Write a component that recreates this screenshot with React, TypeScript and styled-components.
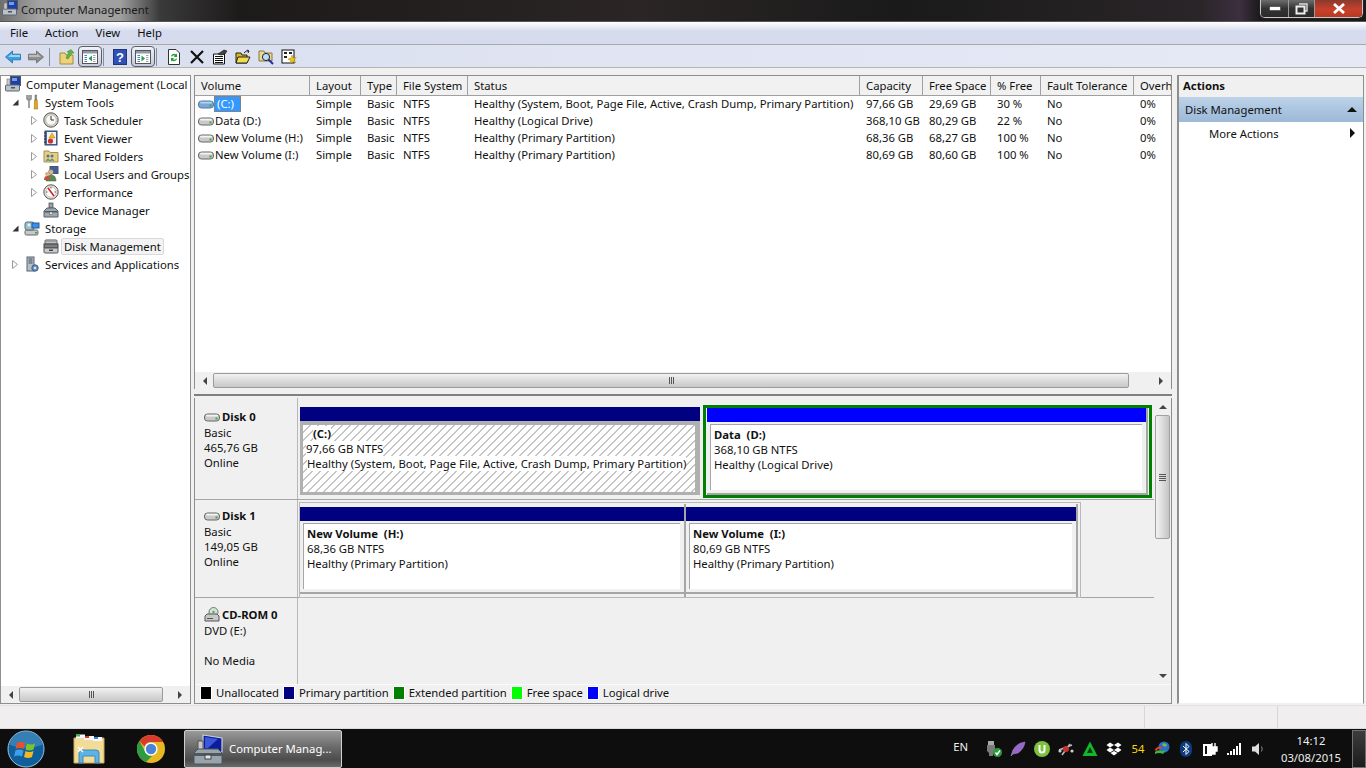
import React from 'react'
import styled, { createGlobalStyle } from 'styled-components'

const GlobalStyle = createGlobalStyle`
  html, body {
    margin: 0;
    padding: 0;
    background: #f0f0f0;
    overflow: hidden;
  }
  * {
    box-sizing: border-box;
  }
`

const Page = styled.div`
  color: #111;
  display: flex;
  flex-direction: column;
  font-family: 'Noto Sans', 'Open Sans', sans-serif;
  font-size: 11.3px;
  height: 768px;
  overflow: hidden;
  width: 1366px;
`

const TitleBar = styled.div`
  align-items: flex-start;
  background: linear-gradient(90deg, #6f6f6f 0, #a4a4a4 40px, #a0a0a0 120px, #3a3a3a 160px, #1d1a1a 240px, #2b2525 640px, #1a1a1a 900px, #2a2528 1200px, #3c2f3f 1240px, #1a1a1a 1260px);
  border-bottom: 1px solid #555;
  display: flex;
  flex: 0 0 22px;
  padding-left: 2px;
`

const TitleText = styled.span`
  color: #1a1a1a;
  line-height: 19px;
  margin-left: 3px;
  white-space: nowrap;
`

const WindowButtons = styled.div`
  border: 1px solid #c8c8c8;
  border-radius: 0 0 5px 5px;
  border-top: none;
  box-shadow: 0 0 0 1px #222;
  display: flex;
  height: 18px;
  margin-left: auto;
  margin-right: 3px;
  overflow: hidden;
`

const WindowButton = styled.div<{ $w: number; $close?: boolean }>`
  align-items: center;
  background: ${p => (p.$close ? 'linear-gradient(#8a3a2e, #c8402a 55%, #b83a22)' : 'linear-gradient(#6c6c6c, #333 50%, #2a2a2a)')};
  border-right: ${p => (p.$close ? 'none' : '1px solid #9a9a9a')};
  display: flex;
  height: 100%;
  justify-content: center;
  width: ${p => p.$w}px;
`

const MenuBar = styled.div`
  align-items: center;
  background: linear-gradient(#fff 0, #eef0f8 4px, #d6dcee 9px, #d5dbed 100%);
  border-bottom: 1px solid #a9a9a9;
  display: flex;
  flex: 0 0 23px;
  gap: 17px;
  padding: 0 0 1px 10px;
`

const ToolBar = styled.div`
  align-items: center;
  background: linear-gradient(90deg, #d9deef, #e2e6f4 60%, #e6e9f5);
  border-bottom: 1px solid #b4b4b4;
  display: flex;
  flex: 0 0 23px;
  padding: 1px 0 0 1px;
`

const ToolButton = styled.div<{ $framed?: boolean }>`
  align-items: center;
  background: ${p => (p.$framed ? 'linear-gradient(#f0f2f8, #c4c9da)' : 'transparent')};
  border: ${p => (p.$framed ? '1px solid #5a5f6a' : 'none')};
  border-radius: 4px;
  display: flex;
  height: 21px;
  justify-content: center;
  width: ${p => (p.$framed ? 24 : 23)}px;
`

const ToolSep = styled.div<{ $l: number; $r: number }>`
  background: #8a8fa0;
  flex: none;
  height: 18px;
  margin: 0 ${p => p.$r}px 0 ${p => p.$l}px;
  width: 1px;
`

const Main = styled.div`
  background: #f0f0f0;
  display: flex;
  flex: 0 0 636px;
  padding: 7px 2px 1px 0;
`

const TreePane = styled.div`
  background: #fff;
  border: 1px solid #8e8e8e;
  display: flex;
  flex: 0 0 191px;
  flex-direction: column;
  margin-right: 3px;
  min-width: 0;
`

const TreeList = styled.div`
  flex: 1;
  margin-top: -1px;
  overflow: hidden;
`

const TreeRow = styled.div<{ $level: number }>`
  align-items: center;
  display: flex;
  height: 18px;
  padding-left: ${p => [4, 7, 26][p.$level]}px;
  white-space: nowrap;
`

const Twisty = styled.span`
  align-items: center;
  display: flex;
  flex: 0 0 14px;
  justify-content: center;
  margin-right: 2px;
`

const TreeLabel = styled.span<{ $picked?: boolean }>`
  background: ${p => (p.$picked ? '#f3f3f3' : 'transparent')};
  border: 1px solid ${p => (p.$picked ? '#d9d9d9' : 'transparent')};
  border-radius: 2px;
  line-height: 15px;
  margin-left: 2px;
  padding: 0 2px;
`

const HScroll = styled.div`
  align-items: center;
  background: #f0f0f0;
  display: flex;
  flex: 0 0 17px;
  padding: 0 8px;

  > *:last-child {
    margin-left: auto;
  }
`

const ScrollThumb = styled.div<{ $w: number }>`
  align-items: center;
  background: linear-gradient(#f2f2f2, #dcdcdc 50%, #c8c8c8);
  border: 1px solid #9b9b9b;
  border-radius: 2px;
  display: flex;
  height: 15px;
  justify-content: center;
  margin-left: 6px;
  width: ${p => p.$w}px;
`

const Grip = styled.span`
  border-left: 1px solid #555;
  border-right: 1px solid #555;
  height: 7px;
  position: relative;
  width: 5px;

  &::after {
    background: #555;
    content: '';
    height: 7px;
    left: 1px;
    position: absolute;
    width: 1px;
  }
`

const Arrow = styled.span<{ $dir: 'left' | 'right' | 'up' | 'down'; $c?: string; $size?: number }>`
  border: ${p => p.$size || 4}px solid transparent;
  flex: none;
  height: 0;
  width: 0;
  ${p => (p.$dir === 'left' ? `border-left-width:0;border-right-color:${p.$c || '#444'};` : '')}
  ${p => (p.$dir === 'right' ? `border-right-width:0;border-left-color:${p.$c || '#444'};` : '')}
  ${p => (p.$dir === 'up' ? `border-top-width:0;border-bottom-color:${p.$c || '#444'};` : '')}
  ${p => (p.$dir === 'down' ? `border-bottom-width:0;border-top-color:${p.$c || '#444'};` : '')}
`

const Center = styled.div`
  display: flex;
  flex: 0 0 978px;
  flex-direction: column;
  margin-right: 5px;
`

const VolumePane = styled.div`
  background: #fff;
  border: 1px solid #8e8e8e;
  border-bottom: none;
  display: flex;
  flex: 0 0 314px;
  flex-direction: column;
`

const Columns = '115px 51px 36px 71px 392px 63px 68px 50px 93px 1fr'

const HeaderRow = styled.div`
  display: grid;
  flex: 0 0 19px;
  grid-template-columns: ${Columns};
`

const HeaderCell = styled.div`
  background: #f1f1f1;
  border-bottom: 1px solid #a0a0a0;
  border-right: 1px solid #a0a0a0;
  line-height: 19px;
  overflow: hidden;
  padding-left: 6px;
  white-space: nowrap;

  &:last-child {
    border-right: none;
  }
`

const VolumeBody = styled.div`
  flex: 1;
  margin-top: -1px;
`

const VolumeRow = styled.div`
  display: grid;
  grid-template-columns: ${Columns};
  height: 17px;
`

const Cell = styled.div`
  line-height: 17px;
  overflow: hidden;
  padding-left: 6px;
  white-space: nowrap;
`

const VolumeCell = styled.div`
  align-items: center;
  display: flex;
  padding-left: 3px;
  white-space: nowrap;
`

const VolumeName = styled.span<{ $picked?: boolean }>`
  background: ${p => (p.$picked ? '#3399ff' : 'transparent')};
  color: ${p => (p.$picked ? '#fff' : '#111')};
  line-height: 16px;
  outline: ${p => (p.$picked ? '1px dotted #c86a20' : 'none')};
  outline-offset: -1px;
  padding: ${p => (p.$picked ? '0 7px 0 3px' : '0 0 0 1px')};
`

const Splitter = styled.div`
  border-bottom: 2px solid #808080;
  flex: 0 0 7px;
  margin-bottom: 2px;
`

const DiskPane = styled.div`
  background: #f0f0f0;
  border: 1px solid #8e8e8e;
  border-top: none;
  display: flex;
  flex: 1;
  flex-direction: column;
`

const DiskScroller = styled.div`
  display: flex;
  flex: 0 0 286px;
`

const DiskList = styled.div`
  flex: 1;
  overflow: hidden;
`

const DiskRow = styled.div<{ $h: number; $last?: boolean }>`
  border-bottom: ${p => (p.$last ? 'none' : '1px solid #a6a6a6')};
  display: flex;
  height: ${p => p.$h}px;
`

const DiskLabel = styled.div<{ $top: number }>`
  border-right: 1px solid #b8b8b8;
  flex: 0 0 103px;
  line-height: 15px;
  padding: ${p => p.$top}px 0 0 9px;
  white-space: nowrap;
`

const DiskName = styled.div`
  align-items: center;
  display: flex;
  font-weight: 700;
  gap: 2px;
  height: 15px;
  margin-bottom: 1px;
`

const Partitions = styled.div<{ $top: number }>`
  align-items: flex-start;
  display: flex;
  flex: 1;
  padding: ${p => p.$top}px 0 0 2px;
`

const Partition = styled.div<{ $w?: number; $flush?: boolean }>`
  border-right: 2px solid #a6a6a6;
  flex: none;
  padding-top: ${p => (p.$flush ? 0 : 3)}px;
  width: ${p => (p.$w ? `${p.$w}px` : 'auto')};
`

const BootPartition = styled.div<{ $w: number }>`
  flex: none;
  padding: 3px 1px 0 0;
  width: ${p => p.$w}px;
`

const GreenFrame = styled.div<{ $w: number }>`
  border: 3px solid #008000;
  flex: none;
  height: 93px;
  margin: 1px 0 0 2px;
  padding: 0 1px;
  width: ${p => p.$w}px;
`

const PartitionBar = styled.div<{ $c: string }>`
  background: ${p => p.$c};
  height: 14px;
`

const PartitionBox = styled.div`
  border-bottom: 2px solid #a6a6a6;
  display: flex;
  height: 73px;
  line-height: 15px;
  padding: 2px 4px 3px 3px;
  white-space: nowrap;
`

const PartFace = styled.div`
  background: #fff;
  border-left: 1px solid #a6a6a6;
  border-top: 1px solid #a6a6a6;
  flex: 1;
  padding: 2px 0 0 3px;
`

const HatchedBox = styled.div`
  background: repeating-linear-gradient(135deg, #fff 0, #fff 4.66px, #c4c4c4 4.66px, #c4c4c4 5.66px);
  border: 4px solid #b0b0b0;
  border-bottom-width: 3px;
  border-left-width: 3px;
  border-right-width: 5px;
  height: 74px;
  line-height: 15px;
  padding: 1px 0 0 3px;
  white-space: nowrap;
`

const PartTitle = styled.div`
  font-weight: 700;
  padding-left: 7px;
`

const PartLine = styled.div<{ $in?: number }>`
  padding-left: ${p => p.$in || 0}px;

  span {
    background: #fff;
  }
`

const Outline = styled.div`
  border: 1px solid #b8b8b8;
  display: flex;
  height: 96px;
  margin: -1px 0 0 -1px;
  padding: 1px 2px 0 0;
`

const VScroll = styled.div`
  align-items: center;
  background: #f0f0f0;
  display: flex;
  flex: 0 0 17px;
  flex-direction: column;
  padding: 7px 0 6px;
`

const VThumb = styled.div`
  align-items: center;
  background: linear-gradient(90deg, #f2f2f2, #dcdcdc 50%, #c4c4c4);
  border: 1px solid #a0a0a0;
  border-radius: 2px;
  display: flex;
  flex-direction: column;
  gap: 1px;
  height: 124px;
  justify-content: center;
  margin: 6px 0 auto;
  width: 15px;
`

const GripLine = styled.span`
  background: #555;
  height: 1px;
  width: 7px;
`

const Legend = styled.div`
  align-items: center;
  background: #f0f0f0;
  border-top: 1px solid #fafafa;
  display: flex;
  flex: 1;
  gap: 4px;
  letter-spacing: -0.04px;
  padding: 0 0 3px 5px;
`

const LegendItem = styled.div`
  align-items: center;
  display: flex;
  gap: 4px;
`

const Swatch = styled.span<{ $c: string }>`
  background: ${p => p.$c};
  border: 1px solid #fff;
  flex: none;
  height: 14px;
  width: 12px;
`

const ActionsPane = styled.div`
  background: #fff;
  border: 1px solid #8e8e8e;
  border-bottom-color: #f0f0f0;
  border-left-width: 2px;
  display: flex;
  flex: 1;
  flex-direction: column;
  min-width: 0;
`

const ActionsHead = styled.div`
  background: #f0f0f0;
  font-weight: 700;
  height: 21px;
  line-height: 20px;
  padding-left: 4px;
`

const ActionGroup = styled.div`
  align-items: center;
  background: linear-gradient(#bcd2e8, #9cb9d8);
  display: flex;
  height: 25px;
  justify-content: space-between;
  padding: 0 6px 1px 6px;
`

const ActionItem = styled.div`
  align-items: center;
  display: flex;
  height: 24px;
  justify-content: space-between;
  padding: 0 8px 2px 30px;
`

const StatusBar = styled.div`
  background: #f0eeee;
  border-top: 1px solid #e2e2e2;
  display: grid;
  flex: 0 0 23px;
  grid-template-columns: 1145px 133px 1fr;
`

const StatusCell = styled.div`
  border-right: 1px solid #d8d6d6;

  &:last-child {
    border-right: none;
  }
`

const TaskBar = styled.div`
  align-items: center;
  background: #0e0e0e;
  border-top: 1px solid #dcdcdc;
  display: flex;
  flex: 1;
`

const StartOrb = styled.div`
  display: flex;
  flex: 0 0 58px;
  justify-content: center;
  padding-right: 6px;
`

const PinnedIcon = styled.div`
  align-items: center;
  display: flex;
  flex: 0 0 62px;
  justify-content: center;
`

const ActiveTask = styled.div`
  align-items: center;
  background: linear-gradient(#9a9a9a, #6a6a6a 45%, #4c4c4c 80%, #6a6a6a);
  border: 1px solid #d0d0d0;
  border-radius: 2px;
  color: #fff;
  display: flex;
  gap: 5px;
  height: 38px;
  margin-left: 2px;
  padding-left: 7px;
  width: 158px;
`

const Tray = styled.div`
  align-items: center;
  display: flex;
  margin-left: auto;
`

const Lang = styled.span`
  color: #eee;
  margin-right: 18px;
  margin-top: -4px;
`

const TrayIcons = styled.div`
  align-items: center;
  display: flex;
  gap: 8px;
`

const TrayIcon = styled.div`
  align-items: center;
  color: #ffd800;
  display: flex;
  height: 16px;
  justify-content: center;
  width: 16px;
`

const Clock = styled.div`
  color: #eee;
  flex: 0 0 82px;
  line-height: 17px;
  margin-left: 4px;
  padding-top: 1px;
  text-align: center;
`

const ShowDesktop = styled.div`
  background: linear-gradient(#3c3c3c, #1c1c1c);
  border: 1px solid #707070;
  flex: 0 0 14px;
  height: 38px;
`

const Svg = ({ s = 16, vb = 16, children }: { s?: number; vb?: number; children: React.ReactNode }) => (
  <svg width={s} height={s} viewBox={`0 0 ${vb} ${vb}`} style={{ flex: 'none', display: 'block' }}>
    {children}
  </svg>
)

const DriveIcon = ({ blue }: { blue?: boolean }) => (
  <Svg>
    <rect x="0.5" y="5" width="15" height="7" rx="3" fill={blue ? '#7ba7d6' : '#c9c9c9'} stroke={blue ? '#4a78a8' : '#666'} />
    <rect x="2" y="5.8" width="12" height="1.6" rx="0.8" fill={blue ? '#b5d3ee' : '#f3f3f3'} />
    <rect x="11.5" y="8.5" width="2" height="2" fill="#3fa33f" />
  </Svg>
)

const ComputerIcon = () => (
  <Svg>
    <rect x="5.5" y="0.5" width="10" height="9" fill="#1c3fa8" stroke="#555" />
    <rect x="7" y="2" width="5" height="3" fill="#6ea0e8" />
    <rect x="0.5" y="9" width="14" height="6" rx="1" fill="#b8c2c8" stroke="#5c666c" />
    <rect x="2" y="3" width="3" height="6" fill="#c8ccd0" stroke="#6c7074" strokeWidth="0.6" />
    <rect x="6" y="11" width="4" height="1.5" fill="#4c5458" />
  </Svg>
)

const ToolsIcon = () => (
  <Svg>
    <path d="M5 1 v4 M3 1 v3 q0 2 2 2 q2 0 2-2 V1 M5 6 v8" stroke="#8a8a8a" strokeWidth="1.6" fill="none" />
    <path d="M11 1 h1.6 v5 h-1.6 z" fill="#999" stroke="#555" strokeWidth="0.5" />
    <path d="M10.6 6 h2.6 l0.4 9 h-3.4 z" fill="#e6a817" stroke="#8a6410" strokeWidth="0.5" />
  </Svg>
)

const ClockIcon = () => (
  <Svg>
    <circle cx="8" cy="8" r="7.2" fill="#d8d4c4" stroke="#555" />
    <circle cx="8" cy="8" r="5.2" fill="#f8f8f4" stroke="#999" strokeWidth="0.5" />
    <path d="M8 4 V8 H11" stroke="#333" fill="none" />
  </Svg>
)

const EventIcon = () => (
  <Svg>
    <rect x="2" y="1" width="12" height="14" fill="#4c6cb0" stroke="#34486c" />
    <rect x="4" y="2" width="9" height="12" fill="#f2f2f2" />
    <path d="M9 3 l3 5 h-6 z" fill="#f4c20d" stroke="#8a6a00" strokeWidth="0.4" />
    <circle cx="7.5" cy="11" r="2.6" fill="#d03030" />
    <path d="M1 3 h2 M1 6 h2 M1 9 h2 M1 12 h2" stroke="#222" />
  </Svg>
)

const SharedIcon = () => (
  <Svg>
    <path d="M1 3 h5 l1 1.5 h8 V14 H1 z" fill="#e8cf80" stroke="#a89050" />
    <circle cx="5" cy="8" r="1.5" fill="#4a70b8" />
    <circle cx="9" cy="8" r="1.5" fill="#4a70b8" />
    <path d="M3 13 q2-4 4 0 M7 13 q2-4 4 0" stroke="#3a8a50" fill="#7aa0d0" strokeWidth="0.8" />
  </Svg>
)

const UsersIcon = () => (
  <Svg>
    <rect x="7" y="0.5" width="8" height="7" fill="#3c5eb0" stroke="#555" />
    <circle cx="8" cy="6" r="2.5" fill="#e0b890" stroke="#6a5a40" strokeWidth="0.5" />
    <path d="M3 15 q0-6 5-6 q5 0 5 6 z" fill="#5a8a50" stroke="#3c5c34" strokeWidth="0.5" />
    <circle cx="4" cy="8" r="2" fill="#d8b088" />
    <path d="M1 14 q0-4 3-4 q3 0 3 4 z" fill="#c05040" />
  </Svg>
)

const PerfIcon = () => (
  <Svg>
    <circle cx="8" cy="8" r="7.2" fill="#e8e4d8" stroke="#555" />
    <circle cx="8" cy="8" r="5.2" fill="#fff" stroke="#999" strokeWidth="0.5" />
    <path d="M5 4 L11 12" stroke="#d02020" strokeWidth="1.6" />
    <path d="M8 3 v1.5 M3 8 h1.5 M13 8 h-1.5" stroke="#333" strokeWidth="0.8" />
  </Svg>
)

const ToolboxIcon = () => (
  <Svg>
    <rect x="6" y="1" width="4" height="5" fill="#9aa0a8" stroke="#444" strokeWidth="0.7" />
    <path d="M1 9 L4 6 H12 L15 9 V15 H1 z" fill="#9ca8b0" stroke="#56606a" />
    <rect x="1.5" y="9" width="13" height="1.5" fill="#50585e" />
    <rect x="6.5" y="10" width="3" height="2.5" fill="#e8e8e8" stroke="#555" strokeWidth="0.5" />
  </Svg>
)

const StorageIcon = () => (
  <Svg>
    <rect x="1" y="10" width="13" height="5" rx="1.5" fill="#c8c8c8" stroke="#666" />
    <rect x="1" y="2" width="9" height="8" rx="2" fill="#9cc0c8" stroke="#56707a" />
    <rect x="8" y="3" width="7" height="5" fill="#3a8ee8" stroke="#24589c" />
    <circle cx="5" cy="5" r="1.5" fill="#e8f4f8" />
    <rect x="11" y="12" width="2" height="1.5" fill="#3fa33f" />
  </Svg>
)

const DiskMgmtIcon = () => (
  <Svg>
    <rect x="2" y="2" width="12" height="4" rx="1" fill="#dcdcdc" stroke="#555" />
    <rect x="1" y="6" width="14" height="4" fill="#7a7f84" stroke="#444" />
    <rect x="1" y="10" width="14" height="5" rx="1" fill="#c8ccd0" stroke="#555" />
    <rect x="6" y="11.5" width="4" height="1.5" fill="#444" />
    <rect x="3" y="3.3" width="10" height="1" fill="#888" />
  </Svg>
)

const ServicesIcon = () => (
  <Svg>
    <rect x="3" y="1" width="7" height="14" fill="#b4bfcc" stroke="#5a6470" />
    <path d="M4.5 3 h4 M4.5 5 h4 M4.5 7 h4" stroke="#465058" />
    <circle cx="11" cy="12" r="3.2" fill="#6a94c4" stroke="#3c5c80" />
    <circle cx="11" cy="12" r="1" fill="#fff" />
  </Svg>
)

const CdIcon = () => (
  <Svg>
    <circle cx="9.5" cy="5" r="4.5" fill="#cfe4d4" stroke="#777" />
    <circle cx="9.5" cy="5" r="1.2" fill="#5aa85a" />
    <path d="M1 9 L3 7 H13 L15 9 V14 H1 z" fill="#c8c8c8" stroke="#555" />
    <rect x="3" y="11" width="6" height="1" fill="#555" />
  </Svg>
)

const BackIcon = ({ fwd, grey }: { fwd?: boolean; grey?: boolean }) => (
  <Svg>
    <g transform={fwd ? 'translate(16 0) scale(-1 1)' : undefined}>
      <path
        d="M0.5 8 L7.5 2 V5.2 H15.5 V10.8 H7.5 V14 z"
        fill={grey ? '#8f8f8f' : '#3d9fe0'}
        stroke={grey ? '#666' : '#1e6ea8'}
        strokeWidth="0.8"
      />
      <path d="M3 8 L7 4.5 V6 H15 V8 z" fill={grey ? '#bdbdbd' : '#9ad4f4'} />
    </g>
  </Svg>
)

const UpFolderIcon = () => (
  <Svg>
    <path d="M1 4 H6 L7 6 H14 V15 H1 z" fill="#ecd27c" stroke="#a68a3c" />
    <path d="M7 9 L10 3 H8 L12 0.5 L15 4 H13 L9 10 z" fill="#5cb83c" stroke="#3c7c28" strokeWidth="0.5" />
  </Svg>
)

const PaneIcon = ({ right }: { right?: boolean }) => (
  <Svg>
    <rect x="0.5" y="1.5" width="15" height="13" fill="#fff" stroke="#555" />
    <rect x="1" y="2" width="14" height="2.5" fill="#8f97a8" />
    <path d="M2.5 6.5 H5 M2.5 8.5 H5 M2.5 10.5 H5 M2.5 12.5 H5" stroke="#4a78c8" />
    <path d="M11 6.5 H13.5 M11 8.5 H13.5 M11 10.5 H13.5 M11 12.5 H13.5" stroke="#9aa4b8" />
    <path d={right ? 'M6.5 6.5 L10 9.5 L6.5 12.5 z' : 'M10 6.5 L6.5 9.5 L10 12.5 z'} fill="#2a9a4a" />
  </Svg>
)

const HelpIcon = () => (
  <Svg>
    <rect x="1.5" y="0.5" width="13" height="15" fill="#2f50b4" stroke="#20357c" />
    <text x="8" y="13" textAnchor="middle" fontSize="13" fontWeight="700" fill="#fff" fontFamily="Liberation Sans">
      ?
    </text>
  </Svg>
)

const RefreshDocIcon = () => (
  <Svg>
    <path d="M2.5 0.5 H10 L13.5 4 V15.5 H2.5 z" fill="#fff" stroke="#333" />
    <path d="M5 7 a3.2 3.2 0 0 1 5-1.5 L11 4.5 V8 H7.8 L9 6.8 a2 2 0 0 0-3 1 z" fill="#1f9a2f" />
    <path d="M11 10 a3.2 3.2 0 0 1-5 1.5 L5 12.5 V9 H8.2 L7 10.2 a2 2 0 0 0 3-1 z" fill="#1f9a2f" />
  </Svg>
)

const CrossIcon = () => (
  <Svg>
    <path d="M2 2 L14 14 M14 2 L2 14" stroke="#111" strokeWidth="2.2" />
  </Svg>
)

const PropsIcon = () => (
  <Svg>
    <path d="M1.5 5 H12.5 V15 H1.5 z" fill="#fff" stroke="#111" />
    <path d="M3 7.5 H11 M3 9.5 H11 M3 11.5 H11 M3 13.5 H11" stroke="#111" />
    <path d="M6 5 L12 1 L15 2 L13 5 L9 6 z" fill="#444" stroke="#111" strokeWidth="0.6" />
  </Svg>
)

const OpenFolderIcon = () => (
  <Svg>
    <path d="M1 4 H6 L7 6 H12 V14 H1 z" fill="#d8b820" stroke="#222" />
    <path d="M3 8 H15 L12 14 H1 z" fill="#f2dc50" stroke="#222" />
    <path d="M9 4 q2-3 5-2 M14 2 l-2-1 M14 2 l-1 2" stroke="#222" fill="none" />
  </Svg>
)

const SearchIcon = () => (
  <Svg>
    <path d="M1 2 H6 L7 4 H14 V12 H1 z" fill="#e8d890" stroke="#8a7a40" />
    <circle cx="8" cy="8" r="3.6" fill="#b8e0f0" stroke="#224" />
    <path d="M10.5 10.5 L15 15" stroke="#2030a0" strokeWidth="2" />
  </Svg>
)

const WizardIcon = () => (
  <Svg>
    <rect x="1" y="1" width="12" height="13" fill="#fff" stroke="#111" />
    <path d="M3 3 h3 v2 h-3 z M8 3 h3 v2 h-3 z M3 7 h3 v2 h-3 z" fill="#222" />
    <path d="M11 6 l1.2 3 l3 -0.5 l-2 2.2 l1.4 3 l-3-1.2 l-2.4 2.2 l0.4-3.2 l-2.6-1.4 l3-0.8 z" fill="#f2c80f" stroke="#8a6a00" strokeWidth="0.4" />
  </Svg>
)

const MinGlyph = () => (
  <svg width="12" height="5" viewBox="0 0 12 5">
    <rect x="0.5" y="0.5" width="11" height="4" fill="#fff" stroke="#333" strokeWidth="0.6" />
  </svg>
)

const RestoreGlyph = () => (
  <svg width="13" height="12" viewBox="0 0 13 12">
    <path d="M4 1 H12 V8 H10" fill="none" stroke="#ddd" strokeWidth="1.4" />
    <rect x="1.5" y="3.5" width="8" height="7" fill="none" stroke="#eee" strokeWidth="2" />
  </svg>
)

const CloseGlyph = () => (
  <svg width="14" height="11" viewBox="0 0 14 11">
    <path d="M2 1 L12 10 M12 1 L2 10" stroke="#fff" strokeWidth="2.8" />
  </svg>
)

const TreeArrow = ({ open }: { open?: boolean }) =>
  open ? (
    <svg width="7" height="7" viewBox="0 0 7 7">
      <path d="M6.5 0.5 V6.5 H0.5 z" fill="#333" />
    </svg>
  ) : (
    <svg width="6" height="9" viewBox="0 0 6 9">
      <path d="M0.5 0.5 L5.5 4.5 L0.5 8.5 z" fill="#fff" stroke="#9a9a9a" />
    </svg>
  )

const WindowsOrb = () => (
  <svg width="38" height="38" viewBox="0 0 38 38">
    <circle cx="19" cy="19" r="18" fill="#0f5f9c" stroke="#9cc4dc" strokeWidth="1" />
    <path d="M3 15 a16 14 0 0 1 32 0 q-16 6-32 0" fill="#4f95c4" opacity="0.6" />
    <path d="M10 13 q4-2 8 0 l-1.5 6 q-4-2-8 0 z" fill="#e8502a" />
    <path d="M20 13.5 q4 2 8 0 l-1.5 6 q-4 2-8 0 z" fill="#7cc42c" />
    <path d="M8.5 20.5 q4-2 8 0 l-1.5 6 q-4-2-8 0 z" fill="#3f9fe8" />
    <path d="M18.5 21 q4 2 8 0 l-1.5 6 q-4 2-8 0 z" fill="#f4b820" />
  </svg>
)

const ExplorerIcon = () => (
  <svg width="34" height="32" viewBox="0 0 34 32">
    <path d="M2 5 H32 V30 H2 z" fill="#f2dc98" stroke="#c8a860" />
    <rect x="4" y="1.5" width="9" height="4" fill="#f8f8f8" />
    <rect x="4" y="1.5" width="4" height="2" fill="#3cb43c" />
    <rect x="12" y="3" width="10" height="4" fill="#f8f8f8" />
    <rect x="13" y="3" width="4" height="2" fill="#d83c2c" />
    <rect x="21" y="4" width="9" height="4" fill="#f8f8f8" />
    <rect x="22" y="4" width="4" height="2" fill="#2c8ce8" />
    <path d="M7 30 V20 q0-3 3-3 H24 q3 0 3 3 V30 H23 V23 H11 V30 z" fill="#5cb4e4" stroke="#3c88b8" />
    <path d="M6 14 L11 19 M11 14 L6 19" stroke="#fff" strokeWidth="1.2" />
  </svg>
)

const ChromeIcon = () => (
  <svg width="30" height="30" viewBox="0 0 30 30">
    <circle cx="15" cy="15" r="14" fill="#e8b820" />
    <path d="M15 1 A14 14 0 0 1 27.1 8 H15 a7 7 0 0 0-6.5 4.4 L3.5 7 A14 14 0 0 1 15 1 z" fill="#d83c2c" />
    <path d="M3.5 7 L9.6 18.4 a7 7 0 0 0 6.4 3.6 L10 28.1 A14 14 0 0 1 3.5 7 z" fill="#2c9c44" />
    <circle cx="15" cy="15" r="6.6" fill="#fff" />
    <circle cx="15" cy="15" r="5.2" fill="#4a84d8" />
  </svg>
)

const TaskToolbox = () => (
  <svg width="32" height="32" viewBox="0 0 32 32">
    <path d="M11 2 L30 5 V19 L11 17 z" fill="#0c1c9c" stroke="#c8d0d8" strokeWidth="1.2" />
    <path d="M13 4 L26 6 L16 15 L13 15 z" fill="#3a58d8" />
    <rect x="6" y="8" width="5" height="9" fill="#c8c8c8" stroke="#555" />
    <path d="M2 20 L6 16 H26 L30 20 V31 H2 z" fill="#98a4ac" stroke="#4a545c" />
    <rect x="2" y="20" width="28" height="3" fill="#4e585e" />
    <rect x="13" y="22" width="6" height="4" fill="#e8e8e8" stroke="#444" />
  </svg>
)

const UsbTray = () => (
  <Svg>
    <rect x="2" y="0" width="6" height="4" fill="#aaa" />
    <path d="M1 4 H9 V10 L7 12 V15 H3 V12 L1 10 z" fill="#7a7a7a" />
    <circle cx="11.5" cy="11.5" r="4.5" fill="#2a9c3c" />
    <path d="M9.5 11.5 L11 13.5 L14 9.5" stroke="#fff" fill="none" strokeWidth="1.4" />
  </Svg>
)

const FeatherTray = () => (
  <Svg>
    <path d="M1 15 L3 9 Q7 2 15 1 Q14 8 8 12 L3 13 z" fill="#9668c8" stroke="#b48ae0" strokeWidth="0.5" />
  </Svg>
)

const TorrentTray = () => (
  <Svg>
    <circle cx="8" cy="8" r="8" fill="#7cc23c" />
    <path d="M4.5 4 V9 a3.5 3.5 0 0 0 7 0 V4 H9.5 V9 a1.5 1.5 0 0 1-3 0 V4 z" fill="#fff" />
  </Svg>
)

const BugTray = () => (
  <Svg>
    <path d="M1 9 L14 4 M4 14 L12 3" stroke="#bbb" strokeWidth="1.6" />
    <circle cx="8" cy="8" r="3" fill="#c83030" />
    <circle cx="2" cy="10" r="1.6" fill="#ccc" />
    <circle cx="14" cy="10" r="1.6" fill="#ccc" />
  </Svg>
)

const TriangleTray = () => (
  <Svg>
    <path d="M8 0.5 L15.5 15 H0.5 z" fill="#12b82c" />
    <path d="M8 6 L11 12 H5 z" fill="#0a3a14" />
  </Svg>
)

const DropboxTray = () => (
  <Svg>
    <path d="M4 1.5 L8 4 L4 6.5 L0.5 4 z M12 1.5 L15.5 4 L12 6.5 L8 4 z M4 6.5 L8 9 L4 11.5 L0.5 9 z M12 6.5 L15.5 9 L12 11.5 L8 9 z M4.5 12 L8 10 L11.5 12 L8 14.5 z" fill="#fff" />
  </Svg>
)

const IdmTray = () => (
  <Svg>
    <circle cx="10" cy="6" r="5.5" fill="#2c6cc8" />
    <path d="M8 3 q3-2 5 1 q-1 3-4 1 z" fill="#6cc03c" />
    <path d="M0.5 9 q3-5 8-3 l-2 2 q-3-1-4 2 z" fill="#e83c2c" />
    <path d="M1 11 q3-3 7-1 L12 9 L9 13 q-4-2-8 0 z" fill="#3cb83c" />
  </Svg>
)

const BluetoothTray = () => (
  <Svg>
    <rect x="2" y="0" width="12" height="16" rx="6" fill="#0c3a7c" />
    <path d="M5 5 L11 10.5 L8 13.5 V2.5 L11 5.5 L5 11" stroke="#fff" fill="none" />
  </Svg>
)

const PlugTray = () => (
  <Svg>
    <rect x="1" y="3" width="9" height="12" fill="#fff" />
    <rect x="3" y="5" width="2" height="8" fill="#111" />
    <path d="M8 6 h7 v4 h-2 v3 h-3 z M10 2 v4 M13 2 v4" stroke="#fff" fill="#fff" strokeWidth="1.4" />
  </Svg>
)

const SignalTray = () => (
  <Svg>
    <path d="M1 12 h2 v2 h-2 z M4 10 h2 v4 h-2 z M7 8 h2 v6 h-2 z M10 5 h2 v9 h-2 z M13 2 h2 v12 h-2 z" fill="#fff" />
  </Svg>
)

const SpeakerTray = () => (
  <Svg>
    <path d="M2 5.5 H5 L9 2 V14 L5 10.5 H2 z" fill="#ddd" />
    <path d="M11.5 5.5 Q13 8 11.5 10.5" stroke="#888" fill="none" />
  </Svg>
)

const treeItems: { level: number; label: string; icon: React.ReactNode; twisty?: 'open' | 'closed'; picked?: boolean }[] = [
  { level: 1, label: 'System Tools', icon: <ToolsIcon />, twisty: 'open' },
  { level: 2, label: 'Task Scheduler', icon: <ClockIcon />, twisty: 'closed' },
  { level: 2, label: 'Event Viewer', icon: <EventIcon />, twisty: 'closed' },
  { level: 2, label: 'Shared Folders', icon: <SharedIcon />, twisty: 'closed' },
  { level: 2, label: 'Local Users and Groups', icon: <UsersIcon />, twisty: 'closed' },
  { level: 2, label: 'Performance', icon: <PerfIcon />, twisty: 'closed' },
  { level: 2, label: 'Device Manager', icon: <ToolboxIcon /> },
  { level: 1, label: 'Storage', icon: <StorageIcon />, twisty: 'open' },
  { level: 2, label: 'Disk Management', icon: <DiskMgmtIcon />, picked: true },
  { level: 1, label: 'Services and Applications', icon: <ServicesIcon />, twisty: 'closed' },
]

const headers = ['Volume', 'Layout', 'Type', 'File System', 'Status', 'Capacity', 'Free Space', '% Free', 'Fault Tolerance', 'Overh']

const volumes = [
  { name: '(C:)', picked: true, status: 'Healthy (System, Boot, Page File, Active, Crash Dump, Primary Partition)', cap: '97,66 GB', free: '29,69 GB', pct: '30 %' },
  { name: 'Data (D:)', status: 'Healthy (Logical Drive)', cap: '368,10 GB', free: '80,29 GB', pct: '22 %' },
  { name: 'New Volume (H:)', status: 'Healthy (Primary Partition)', cap: '68,36 GB', free: '68,27 GB', pct: '100 %' },
  { name: 'New Volume (I:)', status: 'Healthy (Primary Partition)', cap: '80,69 GB', free: '80,60 GB', pct: '100 %' },
]

const legend = [
  ['#000', 'Unallocated'],
  ['#000080', 'Primary partition'],
  ['#008000', 'Extended partition'],
  ['#00ff00', 'Free space'],
  ['#0000ff', 'Logical drive'],
]

const PartitionCell = ({ c, title, size, status }: { c: string; title: string; size: string; status: string }) => (
  <>
    <PartitionBar $c={c} />
    <PartitionBox>
      <PartFace>
        <b>{title}</b>
        <div>{size}</div>
        <div>{status}</div>
      </PartFace>
    </PartitionBox>
  </>
)

export default function App() {
  return (
    <Page>
      <GlobalStyle />
      <TitleBar>
        <ComputerIcon />
        <TitleText>Computer Management</TitleText>
        <WindowButtons>
          <WindowButton $w={28}>
            <MinGlyph />
          </WindowButton>
          <WindowButton $w={26}>
            <RestoreGlyph />
          </WindowButton>
          <WindowButton $w={47} $close>
            <CloseGlyph />
          </WindowButton>
        </WindowButtons>
      </TitleBar>

      <MenuBar>
        <span>File</span>
        <span>Action</span>
        <span>View</span>
        <span>Help</span>
      </MenuBar>

      <ToolBar>
        <ToolButton><BackIcon /></ToolButton>
        <ToolButton><BackIcon fwd grey /></ToolButton>
        <ToolSep $l={2} $r={5} />
        <ToolButton><UpFolderIcon /></ToolButton>
        <ToolButton $framed><PaneIcon /></ToolButton>
        <ToolSep $l={1} $r={4} />
        <ToolButton><HelpIcon /></ToolButton>
        <ToolButton $framed><PaneIcon right /></ToolButton>
        <ToolSep $l={1} $r={5} />
        <ToolButton><RefreshDocIcon /></ToolButton>
        <ToolButton><CrossIcon /></ToolButton>
        <ToolButton><PropsIcon /></ToolButton>
        <ToolButton><OpenFolderIcon /></ToolButton>
        <ToolButton><SearchIcon /></ToolButton>
        <ToolButton><WizardIcon /></ToolButton>
      </ToolBar>

      <Main>
        <TreePane>
          <TreeList>
            <TreeRow $level={0}>
              <ComputerIcon />
              <TreeLabel>Computer Management (Local</TreeLabel>
            </TreeRow>
            {treeItems.map(item => (
              <TreeRow key={item.label} $level={item.level}>
                <Twisty>{item.twisty && <TreeArrow open={item.twisty === 'open'} />}</Twisty>
                {item.icon}
                <TreeLabel $picked={item.picked}>{item.label}</TreeLabel>
              </TreeRow>
            ))}
          </TreeList>
          <HScroll>
            <Arrow $dir="left" />
            <ScrollThumb $w={144}>
              <Grip />
            </ScrollThumb>
            <Arrow $dir="right" />
          </HScroll>
        </TreePane>

        <Center>
          <VolumePane>
            <HeaderRow>
              {headers.map(h => (
                <HeaderCell key={h}>{h}</HeaderCell>
              ))}
            </HeaderRow>
            <VolumeBody>
              {volumes.map(v => (
                <VolumeRow key={v.name}>
                  <VolumeCell>
                    <DriveIcon blue={v.picked} />
                    <VolumeName $picked={v.picked}>{v.name}</VolumeName>
                  </VolumeCell>
                  <Cell>Simple</Cell>
                  <Cell>Basic</Cell>
                  <Cell>NTFS</Cell>
                  <Cell>{v.status}</Cell>
                  <Cell>{v.cap}</Cell>
                  <Cell>{v.free}</Cell>
                  <Cell>{v.pct}</Cell>
                  <Cell>No</Cell>
                  <Cell>0%</Cell>
                </VolumeRow>
              ))}
            </VolumeBody>
            <HScroll>
              <Arrow $dir="left" />
              <ScrollThumb $w={916}>
                <Grip />
              </ScrollThumb>
              <Arrow $dir="right" />
            </HScroll>
          </VolumePane>

          <Splitter />

          <DiskPane>
            <DiskScroller>
              <DiskList>
                <DiskRow $h={102}>
                  <DiskLabel $top={11}>
                    <DiskName><DriveIcon />Disk 0</DiskName>
                    <div>Basic</div>
                    <div>465,76 GB</div>
                    <div>Online</div>
                  </DiskLabel>
                  <Partitions $top={6}>
                    <BootPartition $w={401}>
                      <PartitionBar $c="#000080" />
                      <HatchedBox>
                        <PartLine><PartTitle><span>(C:)</span></PartTitle></PartLine>
                        <PartLine><span>97,66 GB NTFS</span></PartLine>
                        <PartLine $in={1}><span>Healthy (System, Boot, Page File, Active, Crash Dump, Primary Partition)</span></PartLine>
                      </HatchedBox>
                    </BootPartition>
                    <GreenFrame $w={449}>
                      <Partition $flush>
                        <PartitionCell c="#0000ff" title={'Data\u00a0 (D:)'} size="368,10 GB NTFS" status="Healthy (Logical Drive)" />
                      </Partition>
                    </GreenFrame>
                  </Partitions>
                </DiskRow>

                <DiskRow $h={98}>
                  <DiskLabel $top={8}>
                    <DiskName><DriveIcon />Disk 1</DiskName>
                    <div>Basic</div>
                    <div>149,05 GB</div>
                    <div>Online</div>
                  </DiskLabel>
                  <Partitions $top={3}>
                    <Outline>
                      <Partition $w={386}>
                        <PartitionCell c="#000080" title={'New Volume\u00a0 (H:)'} size="68,36 GB NTFS" status="Healthy (Primary Partition)" />
                      </Partition>
                      <Partition $w={392}>
                        <PartitionCell c="#000080" title={'New Volume\u00a0 (I:)'} size="80,69 GB NTFS" status="Healthy (Primary Partition)" />
                      </Partition>
                    </Outline>
                  </Partitions>
                </DiskRow>

                <DiskRow $h={86} $last>
                  <DiskLabel $top={9}>
                    <DiskName><CdIcon />CD-ROM 0</DiskName>
                    <div>DVD (E:)</div>
                    <div>&nbsp;</div>
                    <div>No Media</div>
                  </DiskLabel>
                </DiskRow>
              </DiskList>
              <VScroll>
                <Arrow $dir="up" />
                <VThumb>
                  <GripLine />
                  <GripLine />
                  <GripLine />
                  <GripLine />
                </VThumb>
                <Arrow $dir="down" />
              </VScroll>
            </DiskScroller>
            <Legend>
              {legend.map(([c, t]) => (
                <LegendItem key={t}>
                  <Swatch $c={c} />
                  {t}
                </LegendItem>
              ))}
            </Legend>
          </DiskPane>
        </Center>

        <ActionsPane>
          <ActionsHead>Actions</ActionsHead>
          <ActionGroup>
            Disk Management
            <Arrow $dir="up" $c="#111" $size={5} />
          </ActionGroup>
          <ActionItem>
            More Actions
            <Arrow $dir="right" $c="#111" $size={5} />
          </ActionItem>
        </ActionsPane>
      </Main>

      <StatusBar>
        <StatusCell />
        <StatusCell />
        <StatusCell />
      </StatusBar>

      <TaskBar>
        <StartOrb><WindowsOrb /></StartOrb>
        <PinnedIcon><ExplorerIcon /></PinnedIcon>
        <PinnedIcon><ChromeIcon /></PinnedIcon>
        <ActiveTask>
          <TaskToolbox />
          Computer Manag...
        </ActiveTask>
        <Tray>
          <Lang>EN</Lang>
          <TrayIcons>
            <TrayIcon><UsbTray /></TrayIcon>
            <TrayIcon><FeatherTray /></TrayIcon>
            <TrayIcon><TorrentTray /></TrayIcon>
            <TrayIcon><BugTray /></TrayIcon>
            <TrayIcon><TriangleTray /></TrayIcon>
            <TrayIcon><DropboxTray /></TrayIcon>
            <TrayIcon>54</TrayIcon>
            <TrayIcon><IdmTray /></TrayIcon>
            <TrayIcon><BluetoothTray /></TrayIcon>
            <TrayIcon><PlugTray /></TrayIcon>
            <TrayIcon><SignalTray /></TrayIcon>
            <TrayIcon><SpeakerTray /></TrayIcon>
          </TrayIcons>
          <Clock>
            14:12
            <br />
            03/08/2015
          </Clock>
          <ShowDesktop />
        </Tray>
      </TaskBar>
    </Page>
  )
}
